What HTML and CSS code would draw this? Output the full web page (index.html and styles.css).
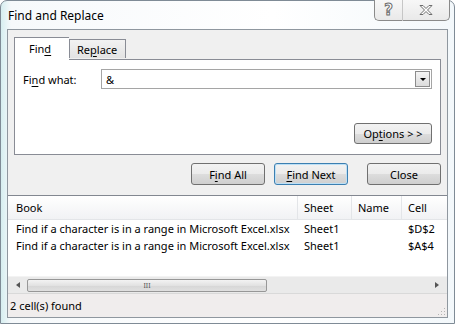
FILE: index.html
```html
<!DOCTYPE html>
<html lang="en">
<head>
    <meta charset="UTF-8">
    <title>Find and Replace</title>
    <link rel="stylesheet" href="styles.css">
</head>
<body>

    <div class="window">
        <div class="titlebar">
            <div class="title">Find and Replace</div>
            <div class="caption-buttons">
                <div class="cap-btn help"><span>?</span></div>
                <div class="cap-btn close">
                    <svg width="16" height="12" viewBox="0 0 16 12">
                        <path d="M2 1.5 L5 1.5 L8 4.5 L11 1.5 L14 1.5 L9.5 6 L14 10.5 L11 10.5 L8 7.5 L5 10.5 L2 10.5 L6.5 6 Z" fill="#fff" stroke="#6d6d6d" stroke-width="1"/>
                    </svg>
                </div>
            </div>
        </div>

        <div class="client">
            <div class="tabs">
                <div class="tab active">Fin<u>d</u></div>
                <div class="tab">Re<u>p</u>lace</div>
            </div>

            <div class="panel">
                <div class="find-row">
                    <label class="find-label">Fi<u>n</u>d what:</label>
                    <div class="combo">
                        <span class="combo-text">&amp;</span>
                        <div class="combo-drop"><span class="down-arrow"></span></div>
                    </div>
                </div>
                <div class="options-row">
                    <button class="btn options">Op<u>t</u>ions &gt; &gt;</button>
                </div>
            </div>

            <div class="actions">
                <button class="btn">F<u>i</u>nd All</button>
                <button class="btn default"><u>F</u>ind Next</button>
                <button class="btn close-btn">Close</button>
            </div>

            <div class="results">
                <div class="list-head">
                    <div class="col col-book">Book</div>
                    <div class="col col-sheet">Sheet</div>
                    <div class="col col-name">Name</div>
                    <div class="col col-cell">Cell</div>
                </div>
                <div class="list-body">
                    <div class="list-row">
                        <div class="col col-book">Find if a character is in a range in Microsoft Excel.xlsx</div>
                        <div class="col col-sheet">Sheet1</div>
                        <div class="col col-name"></div>
                        <div class="col col-cell">$D$2</div>
                    </div>
                    <div class="list-row">
                        <div class="col col-book">Find if a character is in a range in Microsoft Excel.xlsx</div>
                        <div class="col col-sheet">Sheet1</div>
                        <div class="col col-name"></div>
                        <div class="col col-cell">$A$4</div>
                    </div>
                </div>
                <div class="hscroll">
                    <span class="arrow-left"></span>
                    <div class="track">
                        <div class="thumb"><span class="grip">III</span></div>
                    </div>
                    <span class="arrow-right"></span>
                </div>
                <div class="status">
                    <span>2 cell(s) found</span>
                    <span class="size-grip"></span>
                </div>
            </div>
        </div>
    </div>

</body>
</html>
```

FILE: styles.css
```css
body {
    margin: 0;
    font-family: "Noto Sans", "Open Sans", sans-serif;
    font-size: 11px;
    color: #000;
    background-color: #ffffff;
}

u {
    text-decoration: underline;
    text-underline-offset: 2px;
}

.window {
    width: 455px;
    height: 324px;
    box-sizing: border-box;
    border: 1px solid #7f8b96;
    border-radius: 7px 7px 0 0;
    background: linear-gradient(to right, #d6eef0 0px, #f6f9fb 10px, #ffffff 60%, #f3f8fb 100%);
    display: flex;
    flex-direction: column;
}

.titlebar {
    height: 28px;
    display: flex;
    justify-content: space-between;
    align-items: flex-start;
}

.title {
    padding: 6px 0 0 7px;
    font-size: 12px;
}

.caption-buttons {
    display: flex;
    margin-top: -1px;
    margin-right: 4px;
}

.cap-btn {
    height: 20px;
    border: 1px solid #8a8a8a;
    border-top: none;
    background: linear-gradient(to bottom, #f7f7f7, #e9e9e9);
    display: flex;
    align-items: center;
    justify-content: center;
}

.cap-btn.help {
    width: 27px;
    border-radius: 0 0 0 5px;
    border-right-color: #c6c6c6;
}

.cap-btn.help span {
    font-family: "DejaVu Sans", sans-serif;
    font-size: 15px;
    font-weight: bold;
    color: #ffffff;
    -webkit-text-stroke: 1px #6d6d6d;
    margin-top: -1px;
}

.cap-btn.close {
    width: 46px;
    border-left: none;
    border-radius: 0 0 5px 0;
}

.client {
    flex: 1;
    margin: 0 6px 5px 6px;
    border: 1px solid #8f979f;
    background-color: #f0f0f0;
    display: flex;
    flex-direction: column;
}

/* abas */
.tabs {
    display: flex;
    align-items: flex-end;
    padding-left: 6px;
    margin-top: 7px;
    height: 22px;
}

.tab {
    height: 18px;
    padding: 0 8px 0 7px;
    border: 1px solid #898c95;
    border-bottom: none;
    background: linear-gradient(to bottom, #f2f2f2, #e3e3e3);
    line-height: 19px;
    margin-bottom: 1px;
}

.tab.active {
    position: relative;
    z-index: 1;
    height: 22px;
    width: 40px;
    padding: 0 0 0 14px;
    line-height: 22px;
    background: #ffffff;
    margin-bottom: -1px;
    border-right: none;
}

.panel {
    margin: 0 6px;
    border: 1px solid #898c95;
    background-color: #ffffff;
    padding: 9px 8px 10px 8px;
}

.find-row {
    display: flex;
    align-items: center;
}

.find-label {
    width: 78px;
}

.combo {
    flex: 1;
    height: 20px;
    box-sizing: border-box;
    border: 1px solid #a5a5a5;
    display: flex;
    align-items: center;
    justify-content: space-between;
}

.combo-text {
    padding-left: 4px;
}

.combo-drop {
    width: 15px;
    height: 16px;
    margin-right: 1px;
    box-sizing: border-box;
    border: 1px solid #8c8c8c;
    background: linear-gradient(to bottom, #f4f4f4, #dcdcdc);
    display: flex;
    align-items: center;
    justify-content: center;
}

.down-arrow {
    width: 0;
    height: 0;
    border-left: 3px solid transparent;
    border-right: 3px solid transparent;
    border-top: 3px solid #000;
    margin-top: 1px;
}

.options-row {
    display: flex;
    justify-content: flex-end;
    margin-top: 34px;
}

/* botoes */
.btn {
    font-family: inherit;
    font-size: 11px;
    height: 21px;
    padding: 0;
    border: 1px solid #707070;
    border-radius: 3px;
    background: linear-gradient(to bottom, #f2f2f2 0%, #ebebeb 50%, #dddddd 51%, #cfcfcf 100%);
    color: #000;
}

.btn.options {
    width: 78px;
}

.actions {
    display: flex;
    justify-content: flex-end;
    gap: 9px;
    padding-right: 6px;
    margin-top: 8px;
}

.actions .btn {
    width: 74px;
    height: 22px;
}

.actions .btn.close-btn {
    margin-left: 10px;
}

.btn.default {
    border-color: #3c7fb1;
    box-shadow: inset 0 0 0 1px #bde0f6;
}

/* lista de resultados */
.results {
    flex: 1;
    margin-top: 10px;
    border-top: 1px solid #828790;
    background-color: #ffffff;
    display: flex;
    flex-direction: column;
}

.list-head,
.list-row {
    display: flex;
}

.list-head {
    height: 23px;
    background: linear-gradient(to bottom, #ffffff, #f1f2f4);
    border-bottom: 1px solid #e3e5e8;
    align-items: center;
}

.list-head .col {
    height: 23px;
    line-height: 23px;
    border-right: 1px solid #e3e5e8;
}

.list-body {
    flex: 1;
}

.list-row {
    height: 17px;
    line-height: 17px;
}

.col {
    box-sizing: border-box;
    padding-left: 6px;
    white-space: nowrap;
    overflow: hidden;
}

.col-book {
    width: 290px;
    padding-left: 8px;
}

.col-sheet {
    width: 54px;
}

.col-name {
    width: 50px;
}

.col-cell {
    flex: 1;
}

.list-head .col-cell {
    border-right: none;
}

.hscroll {
    height: 16px;
    background-color: #eaeaea;
    border-top: 1px solid #f3f3f3;
    display: flex;
    align-items: center;
}

.arrow-left,
.arrow-right {
    width: 0;
    height: 0;
    border-top: 3px solid transparent;
    border-bottom: 3px solid transparent;
}

.arrow-left {
    border-right: 4px solid #555;
    margin: 0 7px 0 8px;
}

.arrow-right {
    border-left: 4px solid #555;
    margin: 0 8px 0 0;
}

.track {
    flex: 1;
}

.thumb {
    width: 240px;
    height: 13px;
    box-sizing: border-box;
    border: 1px solid #979797;
    border-radius: 2px;
    background: linear-gradient(to bottom, #f3f3f3, #e2e2e2 50%, #d6d6d6 51%, #e0e0e0);
    display: flex;
    align-items: center;
    justify-content: center;
}

.grip {
    font-size: 7px;
    line-height: 7px;
    color: #555;
    letter-spacing: 0px;
}

.status {
    height: 23px;
    background-color: #f0eded;
    border-top: 1px solid #d9d9d9;
    padding-left: 2px;
    display: flex;
    align-items: center;
    justify-content: space-between;
    position: relative;
}

.size-grip {
    position: absolute;
    right: 2px;
    bottom: 2px;
    width: 8px;
    height: 8px;
    background: radial-gradient(circle, #b3b3b3 0.8px, transparent 1px) 0 0 / 3px 3px;
    clip-path: polygon(100% 0, 100% 100%, 0 100%);
}
```
